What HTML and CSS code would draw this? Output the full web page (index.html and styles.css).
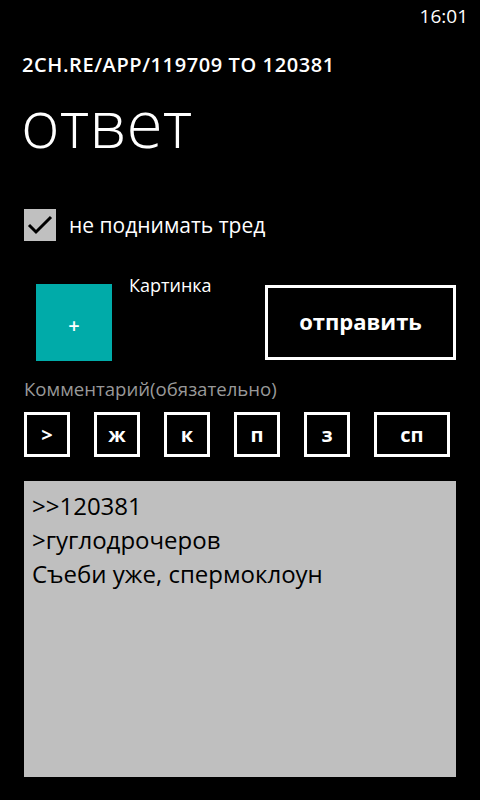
FILE: index.html
```html
<!DOCTYPE html>
<html lang="ru">
<head>
    <meta charset="UTF-8">
    <meta name="viewport" content="width=device-width, initial-scale=1.0">
    <title>ответ</title>
    <link rel="stylesheet" href="styles.css">
</head>
<body>
    <div class="status-bar">
        <span class="clock">16:01</span>
    </div>

    <div class="header">
        <div class="app-title">2CH.RE/APP/119709 TO 120381</div>
        <h1 class="page-title">ответ</h1>
    </div>

    <div class="content">
        <label class="check-row">
            <span class="check-box">
                <svg width="32" height="32" viewBox="0 0 32 32">
                    <polyline points="5,16 12,23 27,8" fill="none" stroke="#000" stroke-width="3"/>
                </svg>
            </span>
            <span class="check-label">не поднимать тред</span>
        </label>

        <div class="attach-row">
            <div class="picture-tile">+</div>
            <div class="picture-label">Картинка</div>
            <button class="send-btn">отправить</button>
        </div>

        <div class="comment-label">Комментарий(обязательно)</div>

        <div class="format-row">
            <button class="fmt-btn">&gt;</button>
            <button class="fmt-btn">ж</button>
            <button class="fmt-btn">к</button>
            <button class="fmt-btn">п</button>
            <button class="fmt-btn">з</button>
            <button class="fmt-btn wide">сп</button>
        </div>

        <div class="comment-box">
            <div>&gt;&gt;120381</div>
            <div>&gt;гуглодрочеров</div>
            <div>Съеби уже, спермоклоун</div>
        </div>
    </div>
</body>
</html>
```

FILE: styles.css
```css
body {
    font-family: 'Open Sans', 'Noto Sans', sans-serif;
    background-color: #000;
    color: #fff;
    margin: 0;
    padding: 0;
    width: 480px;
    height: 800px;
    overflow: hidden;
}
.status-bar {
    height: 32px;
    display: flex;
    justify-content: flex-end;
    align-items: center;
    padding-right: 12px;
}
.clock {
    font-size: 19px;
}
.header {
    padding-left: 22px;
}
.app-title {
    margin-top: 18px;
    font-size: 20px;
    font-weight: 600;
    letter-spacing: 0.6px;
    line-height: 30px;
}
.page-title {
    margin: 0;
    margin-left: -1px;
    font-size: 66px;
    font-weight: 300;
    line-height: 84px;
}
.content {
    padding: 0 24px;
}
.check-row {
    display: flex;
    align-items: center;
    gap: 13px;
    margin-top: 45px;
}
.check-box {
    width: 32px;
    height: 32px;
    background-color: #c0c0c0;
    display: flex;
}
.check-label {
    font-size: 21px;
}
.attach-row {
    display: flex;
    align-items: flex-start;
    margin-top: 43px;
    height: 93px;
}
.picture-tile {
    width: 76px;
    height: 77px;
    margin-left: 12px;
    background-color: #00aba9;
    display: flex;
    align-items: center;
    justify-content: center;
    font-size: 20px;
    font-weight: 600;
    padding-top: 6px;
    box-sizing: border-box;
}
.picture-label {
    font-size: 18px;
    margin-left: 17px;
    margin-top: -11px;
    width: 136px;
}
button {
    font-family: 'Open Sans', 'Noto Sans', sans-serif;
    background-color: #000;
    color: #fff;
    border: 3px solid #fff;
    cursor: pointer;
    padding: 0;
}
.send-btn {
    width: 191px;
    height: 75px;
    margin-top: 1px;
    font-size: 22px;
    font-weight: 700;
    padding-bottom: 4px;
}
.comment-label {
    font-size: 18.6px;
    color: #999;
    line-height: 24px;
}
.format-row {
    display: flex;
    gap: 24px;
    margin-top: 11px;
}
.fmt-btn {
    width: 46px;
    height: 45px;
    font-size: 20px;
    font-weight: 700;
}
.fmt-btn.wide {
    width: 76px;
}
.comment-box {
    margin-top: 24px;
    height: 296px;
    background-color: #bfbfbf;
    color: #000;
    font-size: 24px;
    line-height: 34px;
    padding: 8px 8px;
    box-sizing: border-box;
}
```
